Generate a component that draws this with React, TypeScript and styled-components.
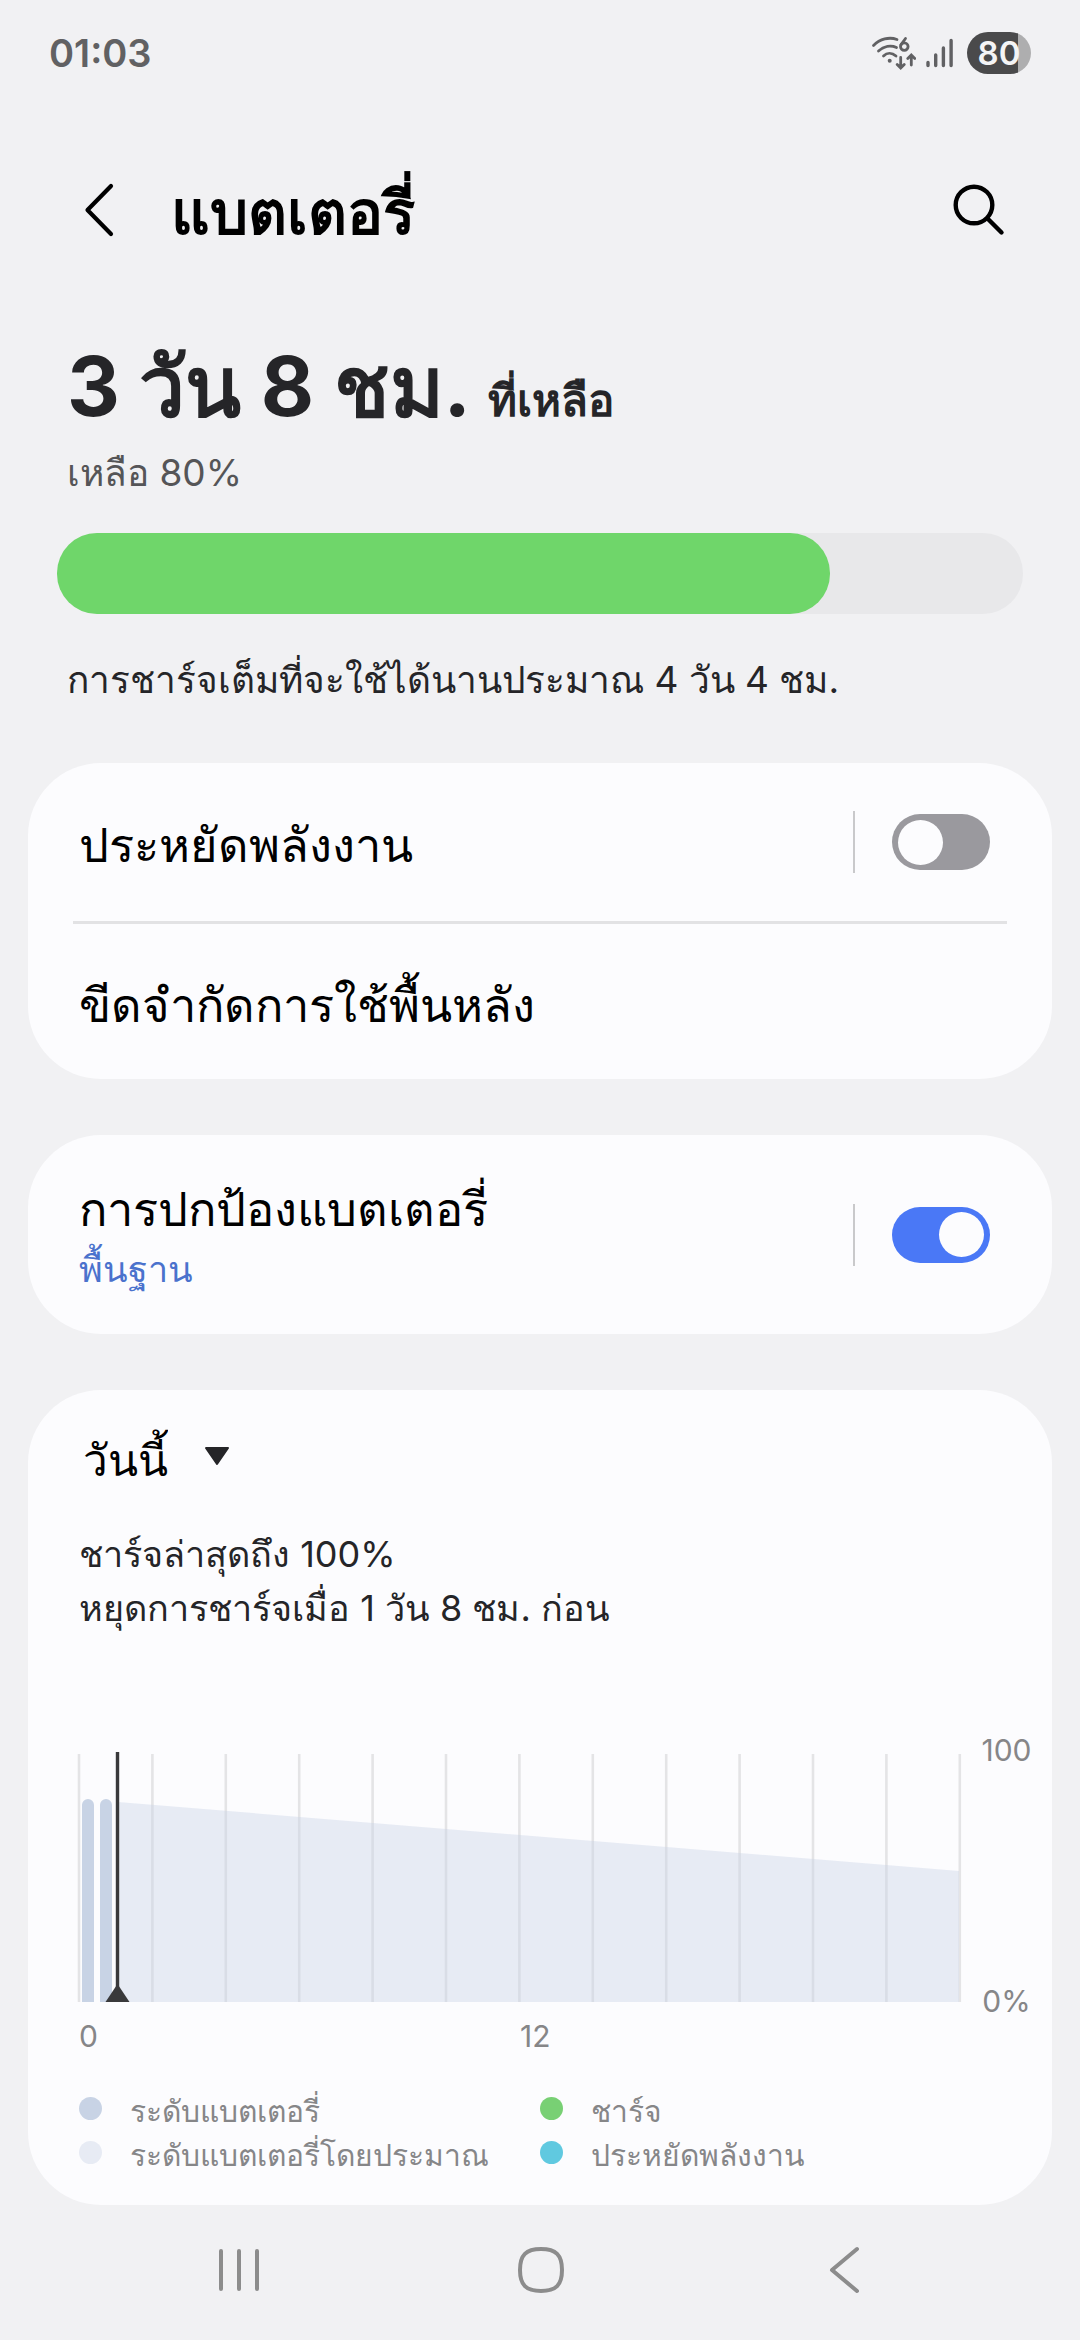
import React, { useState } from "react";
import styled, { createGlobalStyle } from "styled-components";

const GlobalStyle = createGlobalStyle`
  *, *::before, *::after { box-sizing: border-box; }
  body {
    margin: 0;
    background: #f1f1f3;
    color: #252528;
    font-family: Inter, sans-serif;
  }
  button, select, input { font: inherit; color: inherit; margin: 0; }
`;

const Screen = styled.div`
  display: flex;
  flex-direction: column;
  min-height: 100vh;
`;

const StatusBar = styled.header`
  display: flex;
  align-items: center;
  justify-content: space-between;
  height: 106px;
  padding: 0 49px;
  color: #616163;
`;

const Clock = styled.time`
  font-size: 38px;
  font-weight: 600;
  line-height: 48px;
`;

const StatusIcons = styled.div`
  display: flex;
  align-items: center;
  gap: 10px;
`;

const BatteryPill = styled.span`
  display: flex;
  align-items: center;
  justify-content: center;
  width: 64px;
  height: 42px;
  border-radius: 21px;
  background: linear-gradient(to right, #4a4a4b 80%, #aeaeaf 80%);
  color: #f4f4f5;
  font-size: 33px;
  font-weight: 600;
  line-height: 42px;
`;

const TitleBar = styled.div`
  display: flex;
  align-items: center;
  height: 208px;
  padding: 0 71px 0 69px;
`;

const Title = styled.h1`
  flex: 1;
  margin: 0;
  padding: 4px 0 0 42px;
  color: #000;
  font-size: 60px;
  font-weight: 700;
  line-height: 88px;
`;

const IconButton = styled.button`
  display: flex;
  align-items: center;
  justify-content: center;
  width: 60px;
  height: 80px;
  padding: 0;
  border: 0;
  background: none;
`;

const Summary = styled.section`
  padding: 14px 57px 0;
`;

const Headline = styled.p`
  margin: 0;
  padding: 0 10px;
  font-size: 82px;
  font-weight: 700;
  line-height: 118px;
`;

const HeadlineSuffix = styled.span`
  font-size: 44px;
  font-weight: 600;
  line-height: 60px;
`;

const Note = styled.p<{ $muted?: boolean }>`
  margin: 0;
  padding: 0 10px;
  color: ${(p) => (p.$muted ? "#555557" : "#252528")};
  font-size: 37px;
  line-height: 54px;
`;

const Meter = styled.div`
  height: 81px;
  margin: 33px 0 39px;
  border-radius: 40px;
  background: #e8e8ea;
`;

const MeterFill = styled.div`
  height: 100%;
  border-radius: 40px;
  background: #6fd66a;
`;

const Cards = styled.main`
  display: flex;
  flex-direction: column;
  gap: 56px;
  padding: 56px 28px 0;
`;

const Card = styled.section`
  border-radius: 73px;
  background: #fcfcfe;
`;

const Row = styled.div<{ $height: number }>`
  display: flex;
  align-items: center;
  min-height: ${(p) => p.$height}px;
  padding: 0 62px 0 51px;
`;

const RowButton = styled.button`
  display: flex;
  flex: 1;
  flex-direction: column;
  align-items: flex-start;
  padding: 6px 0 0;
  border: 0;
  background: none;
  text-align: left;
`;

const RowTitle = styled.span`
  color: #000;
  font-size: 47px;
  line-height: 62px;
`;

const RowDetail = styled.span`
  color: #4a72cd;
  font-size: 36px;
  line-height: 58px;
`;

const Divider = styled.hr`
  height: 3px;
  margin: 0 45px;
  border: 0;
  background: #e2e2e4;
`;

const SwitchArea = styled.span`
  display: flex;
  align-items: center;
  height: 62px;
  padding-left: 37px;
  border-left: 2px solid #c9c9cb;
`;

const Switch = styled.input`
  appearance: none;
  display: flex;
  align-items: center;
  width: 98px;
  height: 56px;
  padding: 0 6px;
  border-radius: 28px;
  background: #9a999e;

  &::before {
    content: "";
    width: 45px;
    height: 45px;
    border-radius: 50%;
    background: #fcfcfe;
  }

  &:checked {
    justify-content: flex-end;
    background: #4a78f6;
  }
`;

const UsageCard = styled(Card)`
  padding: 28px 0 28px 51px;
`;

const DayPicker = styled.label`
  display: flex;
  align-items: center;
  gap: 36px;
  width: fit-content;
  padding-left: 4px;
`;

const DaySelect = styled.select`
  appearance: none;
  height: 76px;
  padding: 8px 0 0;
  border: 0;
  background: none;
  color: #000;
  font-size: 44px;
  line-height: 66px;
`;

const ChargeInfo = styled.p`
  margin: 33px 0 0;
  font-size: 36px;
  line-height: 54px;
`;

const ChartArea = styled.figure`
  display: grid;
  grid-template-columns: 1fr 91px;
  margin: 117px 0 0;
  color: #868688;
  font-size: 30px;
  line-height: 36px;
`;

const Plot = styled.svg`
  display: block;
  width: 100%;
  overflow: visible;
`;

const LevelAxis = styled.div`
  display: flex;
  flex-direction: column;
  align-items: center;
  justify-content: space-between;
  margin: -20px 0 -17px;
`;

const HourAxis = styled.div`
  display: grid;
  grid-template-columns: 1fr 1fr;
  padding: 16px 0 0;
`;

const Legend = styled.ul`
  display: grid;
  grid-template-columns: 461px 1fr;
  margin: 35px 0 0;
  padding: 0;
  list-style: none;
  color: #868688;
  font-size: 30px;
  line-height: 44px;
`;

const LegendItem = styled.li<{ $color: string }>`
  display: flex;
  align-items: center;
  gap: 28px;

  &::before {
    content: "";
    width: 23px;
    height: 23px;
    margin-bottom: 5px;
    border-radius: 50%;
    background: ${(p) => p.$color};
  }
`;

const NavBar = styled.nav`
  display: flex;
  align-items: center;
  justify-content: center;
  gap: 243px;
  height: 135px;
  padding-bottom: 5px;
`;

const WifiIcon = () => (
  <svg width="46" height="36" viewBox="-2 1 46 36" fill="none" stroke="#616163" strokeWidth="2.800" strokeLinecap="round">
    <path d="M1.500 11.500C8 5 17 2.500 25 5.500" />
    <path d="M6.500 17C12 12 19 11 24.500 13.500" />
    <path d="M11.500 22C15 18.500 20 18.500 24 22" />
    <circle cx="17.700" cy="26.700" r="2" fill="#616163" stroke="none" />
    <circle cx="32.300" cy="12.600" r="3.800" />
    <path d="M28.900 10.800L33.500 4.500" />
    <path d="M28.700 23.500V33.500M25.200 30.500L28.700 34L32.200 30.500M39.300 31V21.500M35.800 24.500L39.300 21L42.800 24.500" />
  </svg>
);

const SignalIcon = () => (
  <svg width="31" height="36" viewBox="0 1 31 36" fill="none" stroke="#616163" strokeWidth="3.400" strokeLinecap="round">
    <path d="M2 28.500V31.500M9.700 21V31.500M17.400 14V31.500M25.100 6.500V31.500" />
  </svg>
);

const BackIcon = () => (
  <svg width="32" height="56" viewBox="0 0 32 56" fill="none" stroke="#000" strokeWidth="4.200" strokeLinecap="round" strokeLinejoin="round">
    <path d="M28 4L4.500 28L28 52" />
  </svg>
);

const SearchIcon = () => (
  <svg width="54" height="54" viewBox="0 0 54 54" fill="none" stroke="#000" strokeWidth="4.400" strokeLinecap="round">
    <circle cx="22" cy="22" r="18.300" />
    <path d="M35.500 35.500L49.500 49.500" />
  </svg>
);

const NavIcon = ({ path }: { path: string }) => (
  <svg width="50" height="50" viewBox="0 0 50 50" fill="none" stroke="#8c8c8c" strokeWidth="4" strokeLinecap="round" strokeLinejoin="round">
    <path d={path} />
  </svg>
);

const GRID_LINES = Array.from({ length: 13 }, (_, i) => i * 73.4);

const BatteryPlot = () => (
  <Plot viewBox="0 0 882 250" role="img" aria-label="ระดับแบตเตอรี่">
    {GRID_LINES.map((x) => (
      <path key={x} d={`M${x} 2V250`} stroke="#e4e4e6" strokeWidth="2.600" />
    ))}
    <path d="M39 50L880 119V250H39Z" fill="#c8d3e5" fillOpacity="0.400" />
    <path d="M3 250V53a6 6 0 0 1 12 0V250ZM21 250V53a6 6 0 0 1 12 0V250Z" fill="#c8d3e5" />
    <path d="M38.500 0V240" stroke="#39393b" strokeWidth="3.400" />
    <path d="M26.500 250L38.500 232L50.500 250Z" fill="#39393b" />
  </Plot>
);

export default function App() {
  const [saving, setSaving] = useState(false);
  const [protection, setProtection] = useState(true);
  const level = 80;

  return (
    <Screen>
      <GlobalStyle />
      <StatusBar>
        <Clock>01:03</Clock>
        <StatusIcons>
          <WifiIcon />
          <SignalIcon />
          <BatteryPill>{level}</BatteryPill>
        </StatusIcons>
      </StatusBar>

      <TitleBar>
        <IconButton aria-label="กลับ"><BackIcon /></IconButton>
        <Title>แบตเตอรี่</Title>
        <IconButton aria-label="ค้นหา"><SearchIcon /></IconButton>
      </TitleBar>

      <Summary>
        <Headline>
          3 วัน 8 ชม. <HeadlineSuffix>ที่เหลือ</HeadlineSuffix>
        </Headline>
        <Note $muted>เหลือ {level}%</Note>
        <Meter role="progressbar" aria-valuenow={level} aria-label="แบตเตอรี่">
          <MeterFill style={{ width: `${level}%` }} />
        </Meter>
        <Note>การชาร์จเต็มที่จะใช้ได้นานประมาณ 4 วัน 4 ชม.</Note>
      </Summary>

      <Cards>
        <Card>
          <Row $height={158}>
            <RowButton><RowTitle id="saving">ประหยัดพลังงาน</RowTitle></RowButton>
            <SwitchArea>
              <Switch type="checkbox" role="switch" aria-labelledby="saving" checked={saving} onChange={(e) => setSaving(e.target.checked)} />
            </SwitchArea>
          </Row>
          <Divider />
          <Row $height={155}>
            <RowButton><RowTitle>ขีดจำกัดการใช้พื้นหลัง</RowTitle></RowButton>
          </Row>
        </Card>

        <Card>
          <Row $height={199}>
            <RowButton>
              <RowTitle id="protection">การปกป้องแบตเตอรี่</RowTitle>
              <RowDetail>พื้นฐาน</RowDetail>
            </RowButton>
            <SwitchArea>
              <Switch type="checkbox" role="switch" aria-labelledby="protection" checked={protection} onChange={(e) => setProtection(e.target.checked)} />
            </SwitchArea>
          </Row>
        </Card>

        <UsageCard>
          <DayPicker>
            <DaySelect aria-label="วันนี้">
              <option>วันนี้</option>
            </DaySelect>
            <svg width="26" height="20" viewBox="0 0 26 20" fill="#252528" stroke="#252528" strokeWidth="2" strokeLinejoin="round">
              <path d="M2 2H24L13 18Z" />
            </svg>
          </DayPicker>
          <ChargeInfo>
            ชาร์จล่าสุดถึง 100%
            <br />
            หยุดการชาร์จเมื่อ 1 วัน 8 ชม. ก่อน
          </ChargeInfo>
          <ChartArea>
            <BatteryPlot />
            <LevelAxis>
              <span>100</span>
              <span>0%</span>
            </LevelAxis>
            <HourAxis>
              <span>0</span>
              <span>12</span>
            </HourAxis>
          </ChartArea>
          <Legend>
            <LegendItem $color="#c8d3e5">ระดับแบตเตอรี่</LegendItem>
            <LegendItem $color="#78d074">ชาร์จ</LegendItem>
            <LegendItem $color="#e7ebf4">ระดับแบตเตอรี่โดยประมาณ</LegendItem>
            <LegendItem $color="#60c9e0">ประหยัดพลังงาน</LegendItem>
          </Legend>
        </UsageCard>
      </Cards>

      <NavBar>
        <IconButton aria-label="ล่าสุด"><NavIcon path="M9 6V44M27 6V44M45 6V44" /></IconButton>
        <IconButton aria-label="หน้าหลัก"><NavIcon path="M26 4C41 4 47 10 47 25S41 46 26 46S5 40 5 25S11 4 26 4Z" /></IconButton>
        <IconButton aria-label="ย้อนกลับ"><NavIcon path="M39 4L14 25L39 46" /></IconButton>
      </NavBar>
    </Screen>
  );
}
